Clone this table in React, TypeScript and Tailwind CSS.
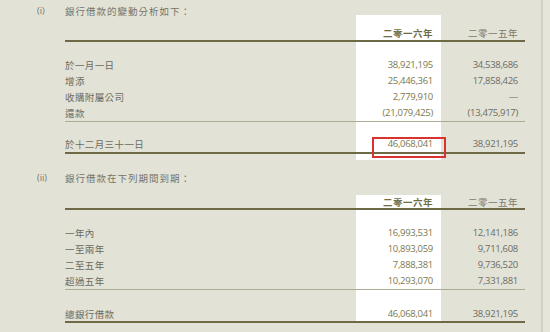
import React from "react";

const cjk = { fontFamily: '"Noto Sans CJK TC", "Noto Sans CJK SC", sans-serif' };
const num = { fontFamily: '"Open Sans", "Liberation Sans", sans-serif' };

type RowProps = {
  h: string;
  label?: string;
  a?: string;
  b?: string;
  border?: string;
  align?: string;
  header?: boolean;
  boxed?: boolean;
};

function Row({ h, label, a, b, border = "", align = "items-center", header, boxed }: RowProps) {
  return (
    <div className={`flex w-[460px] ml-[65px] ${h} ${border}`}>
      <div className={`w-[291px] flex ${align}`}>
        {label && (
          <span className="text-[9.5px] leading-[12px] tracking-[0.4px] text-[#6b6b61]" style={cjk}>
            {label}
          </span>
        )}
      </div>
      <div className={`relative w-[85px] bg-white flex justify-end pr-[8px] ${align}`}>
        {a &&
          (header ? (
            <span className="text-[9.5px] leading-[12px] tracking-[0.5px] font-bold text-[#6f6c42]" style={cjk}>
              {a}
            </span>
          ) : (
            <span className="text-[9.5px] leading-[12px] tracking-[-0.3px] text-[#7a794f]" style={num}>
              {a}
            </span>
          ))}
        {boxed && (
          <div className="absolute left-[16px] right-[-5px] top-[15px] bottom-[-6px] border-2 border-[#d8332f] z-10" />
        )}
      </div>
      <div className={`w-[84px] flex justify-end pr-[7px] ${align}`}>
        {b &&
          (header ? (
            <span className="text-[9.5px] leading-[12px] tracking-[0.5px] text-[#7b7a70]" style={cjk}>
              {b}
            </span>
          ) : (
            <span className="text-[9.5px] leading-[12px] tracking-[-0.3px] text-[#6c6c64]" style={num}>
              {b}
            </span>
          ))}
      </div>
    </div>
  );
}

function Title({ mark, text, cls }: { mark: string; text: string; cls: string }) {
  return (
    <div className={`flex pl-[37px] ${cls}`}>
      <span className="w-[28px] text-[9px] leading-[14px] text-[#74746a]" style={num}>
        {mark}
      </span>
      <span className="text-[9.5px] leading-[14px] tracking-[1px] text-[#74746a]" style={cjk}>
        {text}
      </span>
    </div>
  );
}

export default function App() {
  const dark = "border-b-2 border-[#6d6a45]";
  const light = "border-b border-[#aeac95]";
  return (
    <div className="w-[550px] h-[332px] bg-[#e3e2d6] flex overflow-hidden">
      <div className="w-[541px] flex flex-col">
        <Title mark="(i)" text="銀行借款的變動分析如下：" cls="h-[15px] pt-[4px]" />
        <Row h="h-[27px]" a="二零一六年" b="二零一五年" header border={dark} align="items-end pb-[1px]" />
        <Row h="h-[15px]" />
        <Row h="h-[16px]" label="於一月一日" a="38,921,195" b="34,538,686" />
        <Row h="h-[16px]" label="增添" a="25,446,361" b="17,858,426" />
        <Row h="h-[16px]" label="收購附屬公司" a="2,779,910" b="—" />
        <Row h="h-[17px]" label="還款" a="(21,079,425)" b="(13,475,917)" border={light} />
        <Row h="h-[32px]" label="於十二月三十一日" a="46,068,041" b="38,921,195" border={dark} align="items-end pb-[2px]" boxed />
        <Row h="h-[6px]" />
        <Title mark="(ii)" text="銀行借款在下列期間到期：" cls="h-[35px] pt-[11px]" />
        <Row h="h-[15px]" a="二零一六年" b="二零一五年" header border={dark} align="items-end" />
        <Row h="h-[15px]" />
        <Row h="h-[16px]" label="一年內" a="16,993,531" b="12,141,186" />
        <Row h="h-[16px]" label="一至兩年" a="10,893,059" b="9,711,608" />
        <Row h="h-[16px]" label="二至五年" a="7,888,381" b="9,736,520" />
        <Row h="h-[17px]" label="超過五年" a="10,293,070" b="7,331,881" border={light} />
        <Row h="h-[33px]" label="總銀行借款" a="46,068,041" b="38,921,195" border={dark} align="items-end pb-[1px]" />
      </div>
      <div className="flex-1 border-l-2 border-[#d3d2c6] bg-[#e6e5da]" />
    </div>
  );
}
